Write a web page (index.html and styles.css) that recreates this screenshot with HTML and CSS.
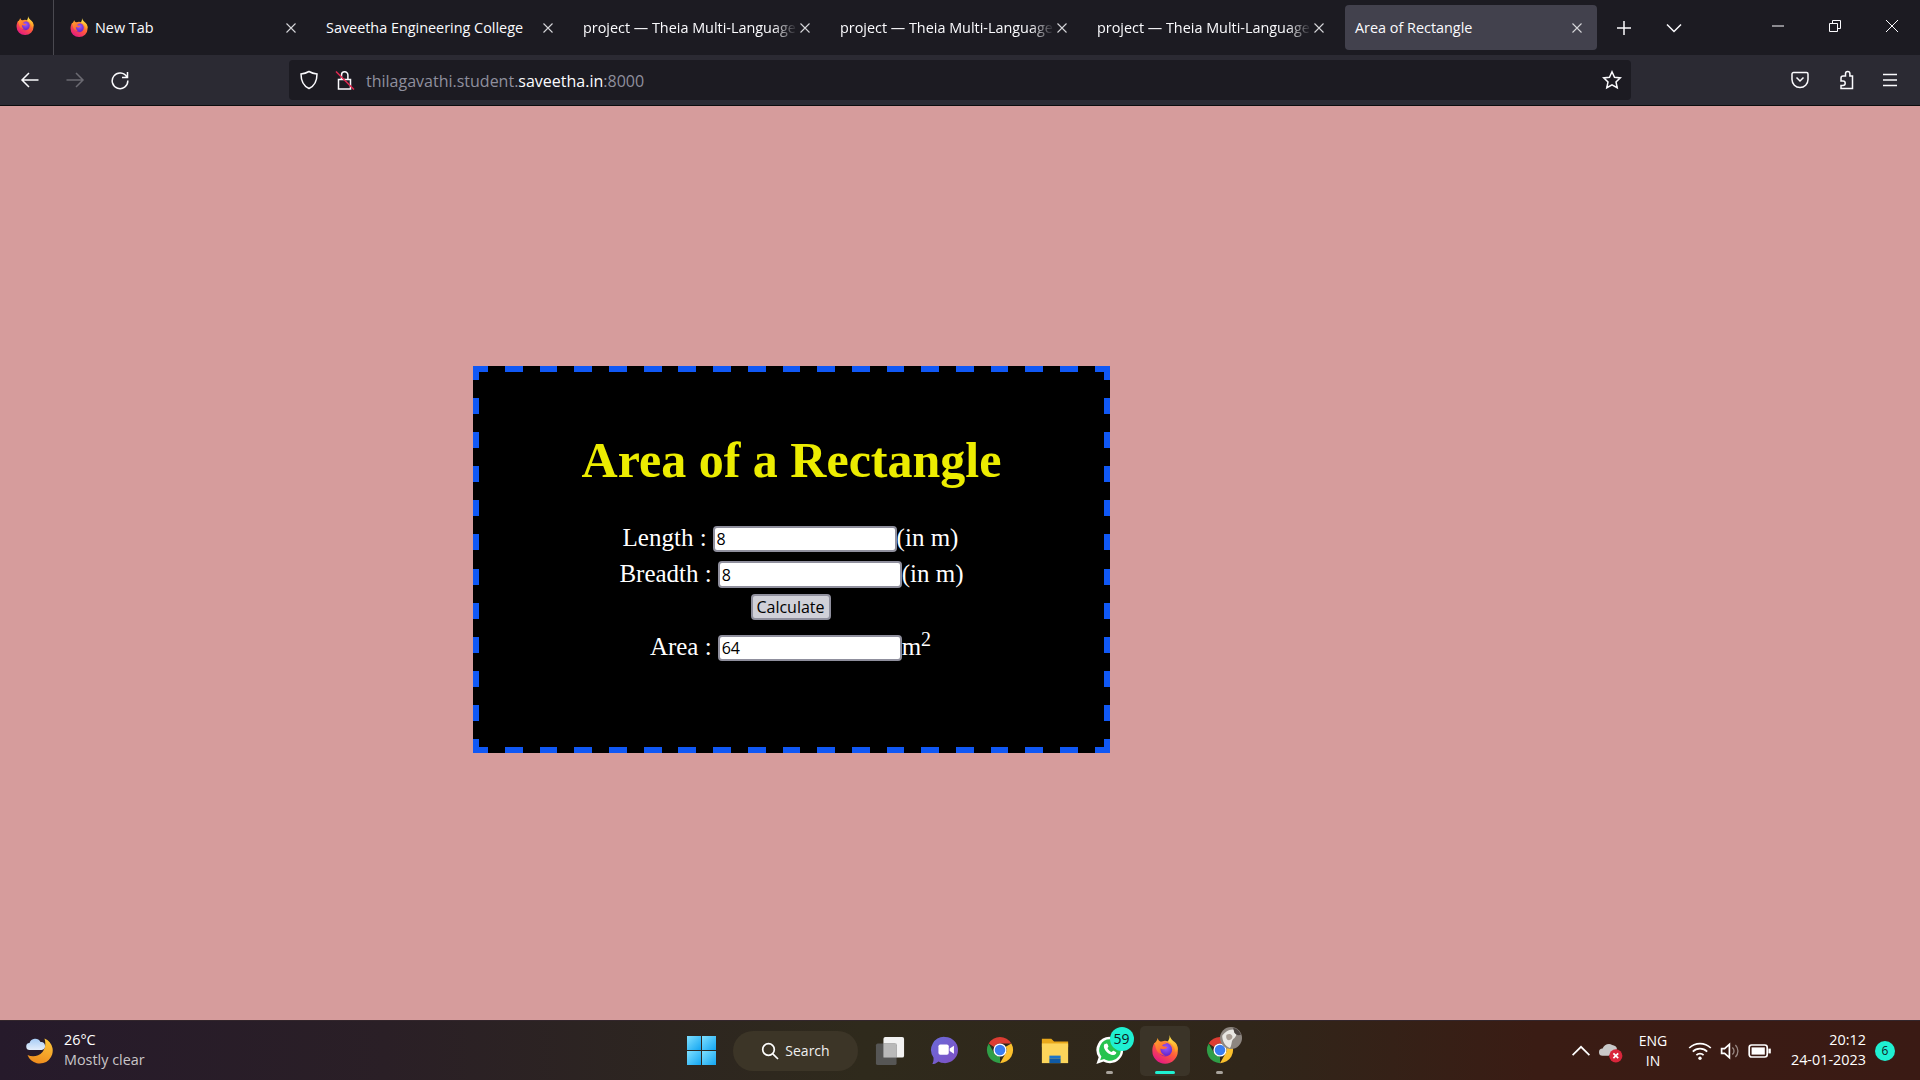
FILE: index.html
```html
<!DOCTYPE html>
<html lang="en">
<head>
<meta charset="utf-8">
<title>Area of Rectangle</title>
<link rel="stylesheet" href="styles.css">
</head>
<body>
<svg class="defs" aria-hidden="true">
  <defs>
    <linearGradient id="fxBody" x1="0.85" y1="0.05" x2="0.2" y2="0.95">
      <stop offset="0" stop-color="#ffb02e"/><stop offset="0.45" stop-color="#ff5a3c"/><stop offset="1" stop-color="#e31587"/>
    </linearGradient>
    <linearGradient id="fxFlame" x1="0.4" y1="0" x2="0.7" y2="1">
      <stop offset="0" stop-color="#ffe14d"/><stop offset="1" stop-color="#ff9a1f"/>
    </linearGradient>
    <radialGradient id="fxGlobe" cx="0.55" cy="0.35" r="0.75">
      <stop offset="0" stop-color="#9a5cff"/><stop offset="0.7" stop-color="#6a2bd0"/><stop offset="1" stop-color="#a2209c"/>
    </radialGradient>
    <linearGradient id="fxSwoosh" x1="0.2" y1="0" x2="0.7" y2="1">
      <stop offset="0" stop-color="#ffa52b"/><stop offset="1" stop-color="#ff4f3d"/>
    </linearGradient>
    <linearGradient id="winTile" x1="0" y1="0" x2="1" y2="1">
      <stop offset="0" stop-color="#7fe0ff"/><stop offset="1" stop-color="#12a5f2"/>
    </linearGradient>
    <linearGradient id="chatBody" x1="0" y1="0" x2="1" y2="1">
      <stop offset="0" stop-color="#6a6bd8"/><stop offset="1" stop-color="#7f4fc4"/>
    </linearGradient>
    <linearGradient id="moon" x1="0.6" y1="0" x2="0.3" y2="1">
      <stop offset="0" stop-color="#fbc43a"/><stop offset="1" stop-color="#ee8a1c"/>
    </linearGradient>
    <linearGradient id="cloud" x1="0" y1="0" x2="0" y2="1">
      <stop offset="0" stop-color="#a8cdf6"/><stop offset="1" stop-color="#e4eefb"/>
    </linearGradient>
    <symbol id="firefox" viewBox="0 0 32 32">
      <path fill="url(#fxBody)" d="M4.600 8.500C3 11.300 2.400 14.200 2.500 17A13.600 13.600 0 0 0 29.700 17c0-3.400-1-6.300-3.100-8.800L16 6Z"/>
      <path fill="url(#fxFlame)" d="M19 7c2-3 2-5 1.700-7 1 3.800 3.200 5.500 5.600 7.500 2 1.700 3.400 4 3.400 8l-2.400 3C27 13 23 8.500 19 7Z"/>
      <circle cx="16.300" cy="15.600" r="7.300" fill="url(#fxGlobe)"/>
      <path fill="url(#fxSwoosh)" d="M4.500 9c1.700-1 3-3 3.700-5.700.7 2.700 2.100 3.800 4 4.300 2 .5 4.300.7 5.800 1.700-3 .1-4.500.9-5.100 2.200 1.500 1 3.700.6 5.500 1.500-1.800 2.500-5 2.500-7.300 1.300-.1 3.300 1.600 6 5 7.700-5-.4-9.200-4-10-8.700-.4-2-.5-3.200-1.600-4.300Z"/>
    </symbol>
    <symbol id="chrome" viewBox="0 0 32 32">
      <path fill="#dc3d33" d="M3.900 9A14 14 0 0 1 28.100 9H16a7 7 0 0 0-6.300 3.900Z"/>
      <path fill="#fbc02d" d="M28.100 9A14 14 0 0 1 16 30l6-10.500A7 7 0 0 0 22.100 12.500Z"/>
      <path fill="#2f9e47" d="M16 30A14 14 0 0 1 3.900 9l6 10.500A7 7 0 0 0 16 23Z"/>
      <circle cx="16" cy="16" r="7" fill="#fff"/>
      <circle cx="16" cy="16" r="5.600" fill="#3a7df0"/>
    </symbol>
  </defs>
</svg>

<header class="tabstrip">
  <div class="fx-button"><svg class="icon20"><use href="#firefox"/></svg></div>
  <div class="tab">
    <svg class="icon20 tab-favicon"><use href="#firefox"/></svg>
    <span class="tab-title">New Tab</span>
    <svg class="tab-close" viewBox="0 0 12 12"><path d="M1.500 1.500l9 9M10.500 1.500l-9 9"/></svg>
  </div>
  <div class="tab">
    <span class="tab-title">Saveetha Engineering College</span>
    <svg class="tab-close" viewBox="0 0 12 12"><path d="M1.500 1.500l9 9M10.500 1.500l-9 9"/></svg>
  </div>
  <div class="tab">
    <span class="tab-title fade">project — Theia Multi-Language</span>
    <svg class="tab-close" viewBox="0 0 12 12"><path d="M1.500 1.500l9 9M10.500 1.500l-9 9"/></svg>
  </div>
  <div class="tab">
    <span class="tab-title fade">project — Theia Multi-Language</span>
    <svg class="tab-close" viewBox="0 0 12 12"><path d="M1.500 1.500l9 9M10.500 1.500l-9 9"/></svg>
  </div>
  <div class="tab">
    <span class="tab-title fade">project — Theia Multi-Language</span>
    <svg class="tab-close" viewBox="0 0 12 12"><path d="M1.500 1.500l9 9M10.500 1.500l-9 9"/></svg>
  </div>
  <div class="tab tab-active">
    <span class="tab-title">Area of Rectangle</span>
    <svg class="tab-close" viewBox="0 0 12 12"><path d="M1.500 1.500l9 9M10.500 1.500l-9 9"/></svg>
  </div>
  <div class="strip-btn"><svg class="line-icon" viewBox="0 0 16 16"><path d="M8 1v14M1 8h14"/></svg></div>
  <div class="strip-btn"><svg class="line-icon" viewBox="0 0 16 16"><path d="M1 4.500l7 7 7-7"/></svg></div>
  <div class="win-controls">
    <div class="win-btn"><svg class="line-icon thin" viewBox="0 0 14 14"><path d="M1 7h12"/></svg></div>
    <div class="win-btn"><svg class="line-icon thin" viewBox="0 0 14 14"><path d="M1.500 4.500h8v8h-8zM4.500 4.500v-3h8v8h-3"/></svg></div>
    <div class="win-btn"><svg class="line-icon thin" viewBox="0 0 14 14"><path d="M1 1l12 12M13 1L1 13"/></svg></div>
  </div>
</header>

<nav class="navbar">
  <div class="nav-btn"><svg class="line-icon big" viewBox="0 0 20 20"><path d="M18.500 10H2M9 3l-7 7 7 7"/></svg></div>
  <div class="nav-btn dim"><svg class="line-icon big" viewBox="0 0 20 20"><path d="M1.500 10H18M11 3l7 7-7 7"/></svg></div>
  <div class="nav-btn"><svg class="line-icon big" viewBox="0 0 20 20"><path d="M16.800 7A7.800 7.800 0 1 0 17.800 10.500M17.500 2v5.500H12"/></svg></div>
  <div class="urlbar">
    <svg class="url-shield line-icon big" viewBox="0 0 20 20"><path d="M10 1.500c2.500 1.500 5 2.200 8 2.500 0 7-2 11.800-8 14.500C4 15.800 2 11 2 4c3-.3 5.500-1 8-2.500Z"/></svg>
    <svg class="url-lock" viewBox="0 0 20 20"><path class="lock-body" d="M3.500 9.500h12v9.500h-12zM6.500 9.500V5a3.200 3.200 0 0 1 6.400 0v4.500"/><path class="lock-slash" d="M1 1.500l18 18"/></svg>
    <span class="url-text"><span class="url-dim">thilagavathi.student.</span>saveetha.in<span class="url-dim">:8000</span></span>
    <svg class="url-star line-icon big" viewBox="0 0 20 20"><path d="M10 1.800l2.500 5.400 5.800.7-4.300 4 1.200 5.800L10 14.800l-5.200 2.900L6 11.900l-4.300-4 5.800-.7Z"/></svg>
  </div>
  <div class="nav-actions">
    <div class="nav-btn"><svg class="line-icon big" viewBox="0 0 20 20"><path d="M3.500 2.500h13c.8 0 1.500.7 1.500 1.500v5.500a8 8 0 0 1-16 0V4c0-.8.7-1.500 1.500-1.500ZM6.500 7.500L10 11l3.500-3.500"/></svg></div>
    <div class="nav-btn"><svg class="line-icon big" viewBox="0 0 20 20"><path d="M8 6h2.500V3.800a2.200 2.200 0 0 1 4.400 0V6h2.600v12.500H6v-3h2a2.200 2.200 0 0 0 0-4.400H6V8c0-1 .9-2 2-2Z"/></svg></div>
    <div class="nav-btn"><svg class="line-icon big" viewBox="0 0 20 20"><path d="M3 4.500h14M3 10h14M3 15.500h14"/></svg></div>
  </div>
</nav>

<main class="page">
  <section class="panel">
    <h1 class="heading">Area of a Rectangle</h1>
    <div class="row row-length"><label class="field-label">Length :</label><input class="field" type="text" value="8"><span class="unit">(in m)</span></div>
    <div class="row row-breadth"><label class="field-label">Breadth :</label><input class="field tall" type="text" value="8"><span class="unit">(in m)</span></div>
    <div class="row row-button"><button class="calc" type="button">Calculate</button></div>
    <div class="row row-area"><label class="field-label">Area :</label><input class="field" type="text" value="64"><span class="unit">m<sup class="power">2</sup></span></div>
  </section>
</main>

<footer class="taskbar">
  <div class="weather">
    <svg class="weather-icon" viewBox="0 0 28 28">
      <path fill="url(#moon)" d="M19 1.500A13 13 0 1 1 2 18c5 2.500 11 1.500 15-3 3-3.500 3.500-9 2-13.500Z"/>
      <path fill="url(#cloud)" d="M4.500 13a3.500 3.500 0 0 1-.5-7A6 6 0 0 1 15 5a4 4 0 0 1 1 8Z"/>
    </svg>
    <div class="weather-text">
      <span class="temp">26°C</span>
      <span class="cond">Mostly clear</span>
    </div>
  </div>
  <svg class="win-logo" viewBox="0 0 29 29">
    <rect x="0" y="0" width="14" height="14" fill="url(#winTile)"/>
    <rect x="15" y="0" width="14" height="14" fill="url(#winTile)"/>
    <rect x="0" y="15" width="14" height="14" fill="url(#winTile)"/>
    <rect x="15" y="15" width="14" height="14" fill="url(#winTile)"/>
  </svg>
  <div class="search">
    <svg class="search-icon" viewBox="0 0 18 18"><circle cx="7.500" cy="7.500" r="5.800"/><path d="M11.800 11.800L17 17"/></svg>
    <span>Search</span>
  </div>
  <div class="task-cells">
    <div class="cell">
      <svg class="task-icon" viewBox="0 0 30 32">
        <rect x="8" y="2" width="22" height="22" rx="2" fill="#f2f2f2"/>
        <rect x="0" y="9" width="22" height="23" rx="2" fill="#5a5a5a" fill-opacity="0.92"/>
        <rect x="8" y="9" width="14" height="15" fill="#b9b9b9"/>
      </svg>
      <i class="dot none"></i>
    </div>
    <div class="cell">
      <svg class="task-icon" viewBox="0 0 30 32">
        <path fill="url(#chatBody)" d="M15 2a14 14 0 1 1-7 26.200C6 30 4 31 1.500 31c1-2 1.500-4 1.200-7A14 14 0 0 1 15 2Z"/>
        <rect x="8" y="10" width="11" height="11" rx="2" fill="#fff"/>
        <path fill="#fff" d="M20 14.500l4.500-3v8.500l-4.500-3Z"/>
      </svg>
      <i class="dot none"></i>
    </div>
    <div class="cell">
      <svg class="task-icon"><use href="#chrome"/></svg>
      <i class="dot none"></i>
    </div>
    <div class="cell">
      <svg class="task-icon" viewBox="0 0 30 32">
        <path fill="#e9a81a" d="M1 4h10l3 3h15v6H1Z"/>
        <path fill="#fcd55b" d="M1 9h28v21H1Z"/>
        <path fill="#1a74c9" d="M9 22h12v3H9Z"/>
        <path fill="#0f5aa6" d="M9 25h12v5H9Z"/>
      </svg>
      <i class="dot none"></i>
    </div>
    <div class="cell">
      <svg class="task-icon" viewBox="0 0 32 32">
        <path fill="#fff" d="M16 2a14 14 0 0 1 0 28c-2.500 0-4.800-.6-6.900-1.800L1.500 31l2.400-7.300A14 14 0 0 1 16 2Z"/>
        <path fill="#27c34f" d="M16 4.500a11.500 11.500 0 0 1 0 23c-2.300 0-4.400-.7-6.300-1.900l-4.200 1.300 1.300-4A11.500 11.500 0 0 1 16 4.500Z"/>
        <path fill="#fff" d="M11.500 9.500c.6-.6 1.500-.6 1.800.2l1 2.300c.2.500-.4 1.300-1 2 .9 1.800 2.400 3.200 4.500 4.200.8-.8 1.500-1.500 2-1.300l2.400 1.200c.7.400.6 1.200.1 1.900-1.200 1.600-3.200 1.800-5.600.8-3.300-1.400-5.700-3.800-6.900-6.800-.7-2-.3-3.700.7-4.700Z"/>
      </svg>
      <i class="dot"></i>
      <span class="count-badge">59</span>
    </div>
    <div class="cell cell-active">
      <svg class="task-icon"><use href="#firefox"/></svg>
      <i class="dot active-bar"></i>
    </div>
    <div class="cell">
      <svg class="task-icon"><use href="#chrome"/></svg>
      <i class="dot"></i>
      <svg class="avatar" viewBox="0 0 20 20">
        <circle cx="10" cy="10" r="10" fill="#8d8680"/>
        <path fill="#e8e6e2" d="M2 8c3-4 8-7 12-5 2 2 1 6-2 8-2 2-1 6-3 8-4-1-7-6-7-11Z"/>
        <path fill="#4b4340" d="M12 1c3 0 6 3 7 6-2 1-5 0-6-2Z"/>
        <path fill="#a89d94" d="M6 7c2-1 4-1 5 1s-1 4-3 4-3-3-2-5Z"/>
      </svg>
    </div>
  </div>
  <div class="tray">
    <svg class="tray-icon" viewBox="0 0 20 20"><path class="tray-line" d="M3 13.500l7-7 7 7"/></svg>
    <svg class="tray-icon" viewBox="0 0 20 20">
      <path fill="#c9c9c9" d="M3 14a3 3 0 0 1 0-6c1-3 5-5 8-3 2 .3 4 1.500 4 3.500L8 14Z"/>
      <circle cx="14" cy="14" r="5.500" fill="#d9263b"/>
      <path class="x-mark" d="M12 12l4 4M16 12l-4 4"/>
    </svg>
    <div class="lang"><span>ENG</span><span>IN</span></div>
    <svg class="tray-icon" viewBox="0 0 20 20">
      <path class="tray-line" d="M1 7.500a12.800 12.800 0 0 1 18 0M4 10.500a8.500 8.500 0 0 1 12 0M7 13.500a4.200 4.200 0 0 1 6 0"/>
      <circle cx="10" cy="16" r="1.400" fill="#fff"/>
    </svg>
    <svg class="tray-icon" viewBox="0 0 20 20">
      <path class="tray-line" d="M3 8h2.500L9.500 4.500v11L5.500 12H3Z"/>
      <path class="tray-faint" d="M12 7a4 4 0 0 1 0 6M14.500 5a7 7 0 0 1 0 10"/>
    </svg>
    <svg class="tray-icon" viewBox="0 0 20 20">
      <rect class="tray-line" x="1" y="5" width="15" height="10" rx="2"/>
      <rect x="3" y="7" width="11" height="6" fill="#fff"/>
      <rect x="17" y="8" width="2" height="4" fill="#fff"/>
    </svg>
    <div class="clock"><span>20:12</span><span>24-01-2023</span></div>
    <span class="notif">6</span>
  </div>
</footer>
</body>
</html>
```
FILE: styles.css
```css
* { box-sizing: border-box; }
html, body { margin: 0; height: 100%; }
body {
  width: 1920px;
  height: 1080px;
  overflow: hidden;
  display: flex;
  flex-direction: column;
  font-family: "Open Sans", "Noto Sans", sans-serif;
  background: #d69c9c;
}
.defs { position: absolute; width: 0; height: 0; }

/* tab strip */
.tabstrip {
  height: 55px;
  flex: none;
  display: flex;
  background: #1c1b22;
  color: #fbfbfe;
}
.fx-button {
  width: 54px;
  margin-right: 3px;
  border-right: 1px solid #4a4950;
  display: flex;
  align-items: center;
  padding-left: 15px;
  padding-bottom: 4px;
}
.icon20 { width: 20px; height: 20px; flex: none; }
.tab {
  width: 253px;
  height: 45px;
  margin: 5px 2px;
  padding: 0 15px 0 10px;
  display: flex;
  align-items: center;
  border-radius: 4px;
  font-size: 14.4px;
}
.tab-active {
  width: 252px;
  margin-left: 3px;
  padding-right: 14px;
  background: #42414d;
}
.tab-favicon { margin-right: 6px; }
.tab-title {
  flex: 1;
  min-width: 0;
  white-space: nowrap;
}
.fade {
  -webkit-mask-image: linear-gradient(90deg, #000 88%, rgba(0, 0, 0, 0.1) 98%);
  mask-image: linear-gradient(90deg, #000 88%, rgba(0, 0, 0, 0.1) 98%);
}
.tab-close {
  width: 12px;
  height: 12px;
  flex: none;
  fill: none;
  stroke: #d6d6da;
  stroke-width: 1.1;
}
.line-icon {
  width: 16px;
  height: 16px;
  fill: none;
  stroke: #fbfbfe;
  stroke-width: 1.5;
}
.line-icon.thin { width: 14px; height: 14px; stroke-width: 1; }
.line-icon.big { width: 20px; height: 20px; }
.strip-btn {
  width: 50px;
  display: flex;
  align-items: center;
  justify-content: center;
}
.win-controls { margin-left: auto; display: flex; }
.win-btn {
  width: 57px;
  display: flex;
  align-items: center;
  justify-content: center;
  padding-bottom: 3px;
}

/* nav bar */
.navbar {
  height: 51px;
  flex: none;
  display: flex;
  align-items: center;
  padding: 0 8px 1px 7px;
  background: #2b2a33;
  border-bottom: 1px solid #0c0c0d;
  color: #fbfbfe;
}
.nav-btn {
  width: 45px;
  height: 40px;
  display: flex;
  align-items: center;
  justify-content: center;
  flex: none;
}
.nav-btn.dim .line-icon { stroke: #6b6a72; }
.urlbar {
  width: 1342px;
  height: 40px;
  margin-left: 147px;
  padding: 0 9px 0 10px;
  display: flex;
  align-items: center;
  background: #1c1b22;
  border-radius: 4px;
  font-size: 16px;
}
.url-shield { flex: none; margin-right: 16px; }
.url-lock { width: 20px; height: 20px; flex: none; margin-right: 11px; fill: none; }
.lock-body { stroke: #fbfbfe; stroke-width: 1.5; }
.lock-slash { stroke: #e22850; stroke-width: 1.5; }
.url-text { flex: 1; white-space: nowrap; padding-top: 3px; }
.url-dim { color: #8f8f9d; }
.url-star { flex: none; }
.nav-actions { margin-left: auto; display: flex; }

/* page */
.page {
  flex: 1;
  padding: 260px 0 0 473px;
  background: #d69c9c;
}
.panel {
  width: 637px;
  height: 387px;
  padding-top: 64px;
  display: flex;
  flex-direction: column;
  align-items: center;
  color: #fff;
  font-family: "Liberation Serif", "Times New Roman", serif;
  font-size: 25px;
  background-color: #000;
  background-image:
    repeating-linear-gradient(90deg, #1058f5 0 15.11px, transparent 15.11px 32px, #1058f5 32px 34.69px),
    repeating-linear-gradient(90deg, #1058f5 0 15.11px, transparent 15.11px 32px, #1058f5 32px 34.69px),
    repeating-linear-gradient(180deg, #1058f5 0 13.89px, transparent 13.89px 32px, #1058f5 32px 34.11px),
    repeating-linear-gradient(180deg, #1058f5 0 13.89px, transparent 13.89px 32px, #1058f5 32px 34.11px);
  background-size: 100% 6px, 100% 6px, 6px 100%, 6px 100%;
  background-position: left top, left bottom, left top, right top;
  background-repeat: no-repeat;
}
.heading {
  margin: 0 0 36px;
  font-size: 50px;
  line-height: 60px;
  font-weight: 700;
  color: #ecec00;
  white-space: nowrap;
}
.row { display: flex; align-items: center; justify-content: center; }
.row-length { margin-right: 2px; }
.row-breadth { margin-top: 9px; }
.row-button { margin-top: 6px; margin-right: 2px; }
.row-area { margin-top: 15px; margin-right: 2px; }
.field-label { margin-right: 6px; line-height: 24px; padding-bottom: 2px; }
.unit { line-height: 24px; padding-bottom: 2px; }
.field {
  width: 184px;
  height: 26px;
  padding: 1px 2px;
  border: 2px solid #8f8f9d;
  border-radius: 4px;
  background: #fff;
  color: #000;
  font-family: "Open Sans", "Noto Sans", sans-serif;
  font-size: 16px;
  outline: none;
}
.field.tall { height: 27px; }
.calc {
  width: 80px;
  height: 26px;
  padding: 0;
  border: 2px solid #8f8f9d;
  border-radius: 4px;
  background: #d0d0d8;
  color: #000;
  font-family: "Open Sans", "Noto Sans", sans-serif;
  font-size: 16px;
  line-height: 20px;
}
.power { font-size: 20px; line-height: 0; vertical-align: 9px; }

/* taskbar */
.taskbar {
  height: 60px;
  flex: none;
  display: flex;
  align-items: center;
  color: #fff;
  background: linear-gradient(90deg, #261a2b 0%, #2a1f26 20%, #2f2a1c 45%, #30261a 65%, #3a1c14 80%, #3a1a14 100%);
  border-top: 1px solid #33262c;
}
.weather {
  width: 687px;
  flex: none;
  padding-left: 25px;
  display: flex;
  align-items: center;
}
.weather-icon { width: 29px; height: 28px; margin-right: 10px; flex: none; }
.weather-text {
  display: flex;
  flex-direction: column;
  padding-bottom: 2px;
  font-size: 14.4px;
  line-height: 20px;
}
.cond { color: #c9c5c8; }
.win-logo { width: 29px; height: 29px; flex: none; }
.search {
  width: 125px;
  height: 40px;
  margin-left: 17px;
  display: flex;
  align-items: center;
  justify-content: center;
  gap: 6px;
  border-radius: 20px;
  background: #3c3527;
  font-size: 14px;
  color: #f0f0f0;
}
.search-icon { width: 18px; height: 18px; fill: none; stroke: #fff; stroke-width: 1.7; }
.task-cells { display: flex; margin-left: 4px; }
.cell {
  position: relative;
  width: 50px;
  height: 50px;
  margin: 0 2.500px;
  padding-top: 9px;
  display: flex;
  flex-direction: column;
  align-items: center;
  gap: 6px;
  border-radius: 5px;
}
.cell-active { background: #3b3428; }
.task-icon { width: 30px; height: 30px; flex: none; }
.dot { width: 7px; height: 3px; border-radius: 2px; background: #a8a39c; flex: none; }
.dot.none { background: transparent; }
.dot.active-bar { width: 20px; background: #1ff0d2; }
.count-badge {
  position: absolute;
  top: 1px;
  left: 25px;
  width: 24px;
  height: 24px;
  border-radius: 50%;
  background: #1ff0d2;
  color: #10201e;
  font-size: 14px;
  line-height: 24px;
  text-align: center;
}
.avatar { position: absolute; top: 1px; left: 25px; width: 22px; height: 22px; }
.tray { margin-left: auto; padding-right: 25px; display: flex; align-items: center; }
.tray-icon { width: 24px; height: 24px; margin: 0 3px; flex: none; fill: none; }
.tray-line { stroke: #fff; stroke-width: 1.4; fill: none; }
.tray-faint { stroke: #9a8a85; stroke-width: 1.1; fill: none; }
.x-mark { stroke: #fff; stroke-width: 1.4; }
.lang {
  width: 50px;
  margin: 0 7px 0 2px;
  display: flex;
  flex-direction: column;
  align-items: center;
  font-size: 14px;
  line-height: 20px;
}
.clock {
  width: 91px;
  display: flex;
  flex-direction: column;
  align-items: flex-end;
  padding-bottom: 2px;
  font-size: 14.4px;
  line-height: 20px;
  white-space: nowrap;
}
.notif {
  width: 20px;
  height: 20px;
  margin-left: 9px;
  border-radius: 50%;
  background: #1ff0d2;
  color: #10201e;
  font-size: 12px;
  line-height: 20px;
  text-align: center;
}
```
